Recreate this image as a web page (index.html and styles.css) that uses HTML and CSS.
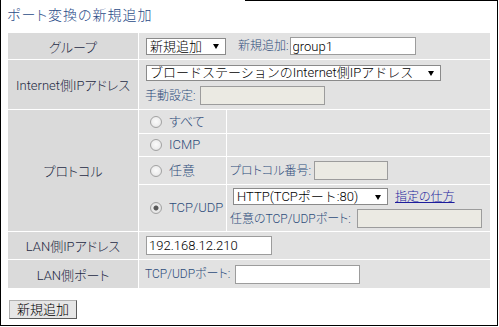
FILE: index.html
```html
<!DOCTYPE html>
<html lang="ja">
<head>
    <meta charset="UTF-8">
    <title>ポート変換の新規追加</title>
    <link rel="stylesheet" href="styles.css">
</head>
<body>
    <div class="frame">
        <h1 class="title">ポート変換の新規追加</h1>
        <table class="form">
            <colgroup>
                <col class="c-label">
                <col class="c-radio">
                <col class="c-value">
            </colgroup>
            <tr class="r-group">
                <th>グループ</th>
                <td colspan="2">
                    <div class="line">
                        <span class="sel sel-group"><select><option>新規追加</option></select></span>
                        <span class="lbl lbl-new">新規追加:</span><input class="txt t-group" type="text" value="group1">
                    </div>
                </td>
            </tr>
            <tr class="r-wan">
                <th>Internet側IPアドレス</th>
                <td colspan="2" class="top">
                    <div class="line">
                        <span class="sel sel-wan"><select><option>ブロードステーションのInternet側IPアドレス</option></select></span>
                    </div>
                    <div class="line line-manual">
                        <span class="lbl">手動設定:</span><input class="txt t-manual" type="text" disabled>
                    </div>
                </td>
            </tr>
            <tr class="r-all">
                <th rowspan="4">プロトコル</th>
                <td class="radio"><label><input type="radio" name="proto"><span>すべて</span></label></td>
                <td class="sub"></td>
            </tr>
            <tr class="r-icmp">
                <td class="radio"><label><input type="radio" name="proto"><span>ICMP</span></label></td>
                <td class="sub"></td>
            </tr>
            <tr class="r-any">
                <td class="radio"><label><input type="radio" name="proto"><span>任意</span></label></td>
                <td class="sub">
                    <div class="line">
                        <span class="lbl">プロトコル番号:</span><input class="txt t-proto" type="text" disabled>
                    </div>
                </td>
            </tr>
            <tr class="r-tcp">
                <td class="radio"><label><input type="radio" name="proto" checked><span>TCP/UDP</span></label></td>
                <td class="sub top">
                    <div class="line">
                        <span class="sel sel-port"><select><option>HTTP(TCPポート:80)</option></select></span>
                        <a class="help" href="#">指定の仕方</a>
                    </div>
                    <div class="line line-any">
                        <span class="lbl">任意のTCP/UDPポート:</span><input class="txt t-anyport" type="text" disabled>
                    </div>
                </td>
            </tr>
            <tr class="r-lanip">
                <th>LAN側IPアドレス</th>
                <td colspan="2">
                    <div class="line">
                        <input class="txt t-lanip" type="text" value="192.168.12.210">
                    </div>
                </td>
            </tr>
            <tr class="r-lanport">
                <th>LAN側ポート</th>
                <td colspan="2">
                    <div class="line">
                        <span class="lbl">TCP/UDPポート:</span><input class="txt t-lanport" type="text">
                    </div>
                </td>
            </tr>
        </table>
        <button class="add">新規追加</button>
    </div>
</body>
</html>
```

FILE: styles.css
```css
body {
    margin: 0;
    background: #fff;
    font-family: Roboto, "Liberation Sans", "Noto Sans CJK JP", sans-serif;
    font-feature-settings: "palt";
    font-weight: 300;
    color: #1f2a44;
}
.frame {
    width: 498px;
    height: 326px;
    box-sizing: border-box;
    border: 1px solid #000;
    padding: 0 6px;
}
.title {
    margin: -1px 0 0 -6px;
    padding: 5px 0 0 6px;
    width: 238px;
    background: #fff;
    font-size: 14px;
    line-height: 20px;
    font-weight: 300;
    letter-spacing: 1px;
    color: #2b4c88;
}
.form {
    margin-top: 7px;
    width: 484px;
    table-layout: fixed;
    border-spacing: 1px;
}
.c-label { width: 130px; }
.c-radio { width: 87px; }
.c-value { width: 263px; }
.form th {
    background: #dadada;
    font-size: 13px;
    font-weight: 300;
    text-align: center;
    padding: 0;
    color: #1f2a44;
}
.form td {
    background: #e2e2e2;
    padding: 0 0 0 6px;
    font-size: 12px;
    color: #2e4d7b;
    vertical-align: middle;
}
.form td.top { vertical-align: top; }
.form td.sub { padding-left: 3px; }
.r-group { height: 26px; }
.r-wan { height: 49px; }
.r-all { height: 23px; }
.r-icmp { height: 22px; }
.r-any { height: 27px; }
.r-tcp { height: 46px; }
.r-lanip { height: 27px; }
.r-lanport { height: 28px; }

.line {
    display: flex;
    align-items: center;
    line-height: 16px;
}
.r-wan td { padding-top: 5px; }
.line-manual { margin-top: 5px; }
.r-tcp td.sub { padding-top: 3px; }
.line-any { margin-top: 4px; }

.sel {
    position: relative;
    display: inline-block;
    margin-left: 1px;
}
.sel select {
    appearance: none;
    display: block;
    width: 100%;
    margin: 0;
    padding: 0 14px 0 3px;
    border: 1px solid #8a8a8a;
    border-radius: 0;
    background: #fff;
    font-family: inherit;
    font-weight: 300;
    font-size: 13px;
    color: #000;
    box-sizing: border-box;
}
.sel::after {
    content: "";
    position: absolute;
    right: 7px;
    top: 50%;
    margin-top: -2px;
    border-left: 3px solid transparent;
    border-right: 3px solid transparent;
    border-top: 5px solid #000;
}
.sel-group { width: 80px; }
.sel-group select { height: 17px; line-height: 15px; }
.sel-wan { width: 295px; }
.sel-wan select { height: 16px; line-height: 14px; }
.sel-port { width: 155px; margin-left: 3px; }
.sel-port select { height: 17px; line-height: 15px; }

.lbl { white-space: nowrap; }
.lbl-new { margin-left: 12px; }

.txt {
    margin: 0 0 0 1px;
    padding: 0 2px;
    border: 1px solid #9c9c9c;
    background: #fff;
    font-family: inherit;
    font-weight: 300;
    font-size: 13px;
    color: #000;
    box-sizing: border-box;
}
.txt:disabled { background: #ebeae3; }
.t-group { width: 126px; height: 18px; }
.t-manual { width: 125px; height: 19px; margin-left: 4px; }
.t-proto { width: 74px; height: 19px; margin-left: 3px; }
.t-anyport { width: 125px; height: 19px; margin-left: 6px; }
.t-lanip { width: 126px; height: 19px; }
.t-lanport { width: 125px; height: 19px; margin-left: 5px; }

.radio { padding-top: 3px; }
.form td.radio { padding-left: 11px; font-size: 13px; }
.radio label {
    display: flex;
    align-items: center;
    gap: 7px;
    line-height: 16px;
}
.radio input {
    appearance: none;
    width: 12px;
    height: 12px;
    margin: 0;
    border-radius: 50%;
    border: 1px solid #a2a2a2;
    background: radial-gradient(circle at 50% 45%, #fbfbfb 0, #eeeeee 55%, #d6d6d6 100%);
    box-sizing: border-box;
}
.radio input:checked {
    background: radial-gradient(circle, #585858 0, #585858 2px, #ededed 3px, #d6d6d6 100%);
}

.help {
    margin-left: 7px;
    color: #1c1c9c;
    font-size: 12px;
}

.add {
    display: block;
    margin: 11px 0 0 2px;
    width: 68px;
    height: 19px;
    padding: 0;
    border: 1px solid;
    border-color: #b0b0b0 #5a5a5a #5a5a5a #b0b0b0;
    background: #e6e6e6;
    font-family: inherit;
    font-weight: 300;
    font-size: 13px;
    line-height: 17px;
    color: #000;
}
```
